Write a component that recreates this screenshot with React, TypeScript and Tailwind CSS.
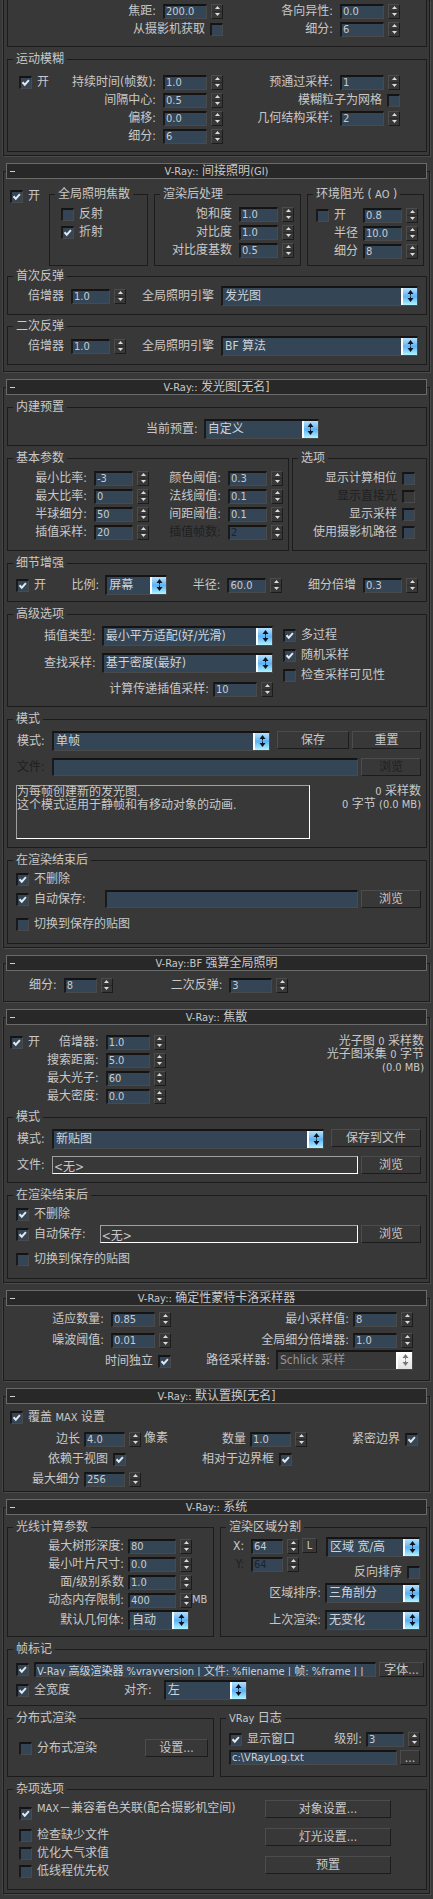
import { useId, type ReactNode } from "react";
import clsx from "clsx";

const well =
  "border-t-2 border-l-2 border-r border-b border-t-[#141414] border-l-[#1a1a1a] border-r-[#4a4a4a] border-b-[#4a4a4a]";
const raised =
  "border border-t-[#4c4c4c] border-l-[#4c4c4c] border-r-[#1c1c1c] border-b-[#1c1c1c]";

/* Latin runs are set one size below the Chinese text. */
function L({ children }: { children: ReactNode }) {
  return <span className="text-[11px]">{children}</span>;
}

function Panel({ title, className, children }: { title: ReactNode; className?: string; children: ReactNode }) {
  return (
    <section
      className={clsx(
        "mx-[3px] mt-[15px] border border-[#1c1c1c] px-[2px] shadow-[1px_1px_0_#4a4a4a,-1px_0_0_#444444]",
        className,
      )}
    >
      <h2 className="-mt-[9px] grid h-[16px] grid-cols-[20px_1fr_20px] items-center border border-[#6a6a6a] bg-[#282828] leading-[14px]">
        <button type="button" aria-label="折叠" className="flex h-[14px] items-center pl-[3px]">
          <span className="h-px w-[5px] bg-[#d0d0d0]" />
        </button>
        <span className="text-center whitespace-nowrap">{title}</span>
      </h2>
      {children}
    </section>
  );
}

type GroupProps = { title: ReactNode; className?: string; body?: string; children: ReactNode };

function Group({ title, className, body, children }: GroupProps) {
  return (
    <fieldset className={clsx("min-w-0 border border-[#1c1c1c]", className)}>
      <legend className="ml-[5px] px-[3px] leading-[14px] whitespace-nowrap">{title}</legend>
      <div className={body}>{children}</div>
    </fieldset>
  );
}

function Spinner() {
  return (
    <span className={clsx("flex h-[15px] w-[12px] shrink-0 flex-col", raised)}>
      <button type="button" tabIndex={-1} aria-label="增加" className="flex flex-1 items-center justify-center border-b border-[#2a2a2a]">
        <svg width="5" height="3" viewBox="0 0 5 3">
          <path d="M2.5 0 5 3H0Z" fill="#dcdcdc" />
        </svg>
      </button>
      <button type="button" tabIndex={-1} aria-label="减少" className="flex flex-1 items-center justify-center">
        <svg width="5" height="3" viewBox="0 0 5 3">
          <path d="M0 0H5L2.5 3Z" fill="#dcdcdc" />
        </svg>
      </button>
    </span>
  );
}

type FieldProps = {
  label: ReactNode;
  value: string;
  width?: string;
  gap?: string;
  className?: string;
  disabled?: boolean;
  after?: ReactNode;
};

function Field({ label, value, width = "w-[44px]", gap = "mr-[7px]", className, disabled, after }: FieldProps) {
  const id = useId();
  return (
    <div className={clsx("flex h-[18px] items-center justify-end", className)}>
      <label htmlFor={id} className={clsx("whitespace-nowrap", gap, disabled && "text-[#202020]")}>
        {label}
      </label>
      <input
        id={id}
        defaultValue={value}
        disabled={disabled}
        className={clsx(
          "mr-[4px] h-[15px] shrink-0 bg-[#344556] pl-px text-[11px] leading-[12px] outline-none",
          well,
          width,
          disabled ? "text-[#1c242c]" : "text-[#c8ccd0]",
        )}
      />
      <Spinner />
      {after}
    </div>
  );
}

type BoxProps = { id?: string; name?: string; checked?: boolean; disabled?: boolean; className?: string };

function Box({ id, name, checked, disabled, className }: BoxProps) {
  return (
    <span className={clsx("grid size-[13px] shrink-0", className)}>
      <input
        id={id}
        type="checkbox"
        aria-label={name}
        defaultChecked={checked}
        disabled={disabled}
        className={clsx(
          "peer col-start-1 row-start-1 size-[13px] appearance-none",
          well,
          disabled ? "bg-[#383838]" : "bg-[#344556]",
        )}
      />
      <svg
        viewBox="0 0 13 13"
        className="pointer-events-none invisible col-start-1 row-start-1 size-[13px] peer-checked:visible"
      >
        <path d="M3.5 6.2 5.8 8.7 9.9 4.2" fill="none" stroke="#e4e8ec" strokeWidth="2" />
      </svg>
    </span>
  );
}

type CheckProps = {
  label: ReactNode;
  checked?: boolean;
  disabled?: boolean;
  before?: boolean;
  className?: string;
};

function Check({ label, checked, disabled, before, className }: CheckProps) {
  const id = useId();
  return (
    <div
      className={clsx(
        "flex h-[18px] items-center gap-[5px]",
        before && "flex-row-reverse",
        disabled && "text-[#202020]",
        className,
      )}
    >
      <Box id={id} checked={checked} disabled={disabled} />
      <label htmlFor={id} className="whitespace-nowrap">
        {label}
      </label>
    </div>
  );
}

type PickProps = {
  label?: ReactNode;
  name?: string;
  value: string;
  width?: string;
  gap?: string;
  className?: string;
  disabled?: boolean;
};

function Pick({ label, name, value, width = "flex-1", gap = "mr-[6px]", className, disabled }: PickProps) {
  const id = useId();
  return (
    <div className={clsx("flex h-[20px] items-center", className)}>
      {label && (
        <label htmlFor={id} className={clsx("whitespace-nowrap", gap)}>
          {label}
        </label>
      )}
      <span className={clsx("grid h-[20px] min-w-0", width)}>
        <select
          id={id}
          aria-label={name}
          disabled={disabled}
          className={clsx(
            "col-start-1 row-start-1 h-[20px] w-full appearance-none pl-[2px] leading-[17px] opacity-100 outline-none",
            well,
            disabled ? "bg-[#383838] text-[#969696]" : "bg-[#344556] text-[#d0d4d8]",
          )}
        >
          <option>{value}</option>
        </select>
        <span
          className={clsx(
            "pointer-events-none col-start-1 row-start-1 mr-px flex h-[17px] w-[16px] items-center justify-center self-center justify-self-end border-l-2 border-white",
            disabled
              ? "bg-linear-to-b from-[#ffffff] to-[#e2e2e2]"
              : "bg-linear-to-b from-[#b4e0fc] via-[#5cb2f4] to-[#b0f4ff]",
          )}
        >
          <svg width="7" height="12" viewBox="0 0 7 12">
            <path d="M3.5 0 6.5 4H4V5.5H3V4H.5ZM3.5 12 .5 8H3V6.5H4V8H6.5Z" fill={disabled ? "#777777" : "#0c1420"} />
          </svg>
        </span>
      </span>
    </div>
  );
}

function Button({ children, className, disabled }: { children: ReactNode; className?: string; disabled?: boolean }) {
  return (
    <button
      type="button"
      disabled={disabled}
      className={clsx(
        "shrink-0 text-center leading-[14px] whitespace-nowrap",
        raised,
        className,
        disabled && "text-[#202020]",
      )}
    >
      {children}
    </button>
  );
}

const outlined = "border border-t-[#a0a0a0] border-l-[#a0a0a0] border-r-white border-b-white";

function AfterRender({ path, offset }: { path?: string; offset: string }) {
  return (
    <Group title="在渲染结束后" className="mt-[5px] ml-px" body="pr-[5px] pb-[10px] pl-[8px]">
      <Check label="不删除" checked className="mt-[3px]" />
      <div className="mt-[2px] flex items-center">
        <Check label="自动保存:" checked className={offset} />
        <input
          aria-label="保存路径"
          readOnly={path !== undefined}
          defaultValue={path ?? ""}
          className={clsx(
            "mr-[3px] h-[18px] min-w-0 flex-1 pl-px leading-[14px] outline-none",
            path ? outlined : clsx(well, "bg-[#344556]"),
          )}
        />
        <Button className="h-[18px] w-[60px]">浏览</Button>
      </div>
      <Check label="切换到保存的贴图" className="mt-[7px]" />
    </Group>
  );
}

export default function App() {
  const fileId = useId();
  const file2Id = useId();
  const maxId = useId();
  return (
    <main className="min-h-screen overflow-hidden bg-[#383838] pb-[5px] font-['DejaVu_Sans_Condensed','Noto_Sans_CJK_SC',sans-serif] text-[12px] leading-[14px] text-[#c8c8c8]">
      <section className="mx-[3px] border border-t-0 border-[#1c1c1c] px-[2px] pb-[3px] shadow-[1px_1px_0_#4a4a4a,-1px_0_0_#444444]">
        <div className="ml-px grid grid-cols-[215fr_203fr] border border-t-0 border-[#1c1c1c] pt-[2px] pb-[8px]">
          <div>
            <Field label="焦距:" value="200.0" />
            <Check label="从摄影机获取" before />
          </div>
          <div className="pr-[26px]">
            <Field label="各向异性:" value="0.0" />
            <Field label="细分:" value="6" />
          </div>
        </div>
        <Group title="运动模糊" className="mt-[5px] ml-px" body="pb-[6px]">
          <div className="grid grid-cols-[60fr_155fr_203fr] pt-[7px]">
            <Check label="开" checked className="ml-[11px]" />
            <div>
              <Field label="持续时间(帧数):" value="1.0" />
              <Field label="间隔中心:" value="0.5" />
              <Field label="偏移:" value="0.0" />
              <Field label="细分:" value="6" />
            </div>
            <div className="pr-[26px]">
              <Field label="预通过采样:" value="1" />
              <Check label="模糊粒子为网格" before />
              <Field label="几何结构采样:" value="2" />
            </div>
          </div>
        </Group>
      </section>

      <Panel title={<><L>V-Ray::</L> 间接照明<L>(GI)</L></>} className="pb-[6px]">
        <div className="mt-[8px] grid grid-cols-[33px_99fr_147fr_117fr] gap-x-[6px] pr-[3px] pl-[4px]">
          <Check label="开" checked />
          <Group title="全局照明焦散" body="pb-[5px] pl-[11px]">
            <Check label="反射" className="mt-[4px]" />
            <Check label="折射" checked />
          </Group>
          <Group title="渲染后处理" body="pr-[6px] pb-[5px]">
            <Field label="饱和度" value="1.0" width="w-[39px]" className="mt-[4px]" />
            <Field label="对比度" value="1.0" width="w-[39px]" />
            <Field label="对比度基数" value="0.5" width="w-[39px]" />
          </Group>
          <Group title={<>环境阻光 ( <L>AO</L> )</>} body="pr-[5px] pb-[5px] pl-[8px]">
            <div className="mt-[4px] flex items-center justify-between">
              <Box name="环境阻光" />
              <Field
                label={<span className="inline-block w-[24px]">开</span>}
                value="0.8"
                width="w-[39px]"
                gap="mr-[5px]"
              />
            </div>
            <Field label="半径" value="10.0" width="w-[39px]" gap="mr-[5px]" />
            <Field label="细分" value="8" width="w-[39px]" gap="mr-[5px]" />
          </Group>
        </div>
        <Group title="首次反弹" className="mt-[3px] ml-px" body="pr-[8px] pb-[8px] pl-[20px]">
          <div className="mt-[3px] flex items-center">
            <Field label="倍增器" value="1.0" width="w-[39px]" className="mr-[16px]" />
            <Pick label="全局照明引擎" value="发光图" gap="mr-[7px]" className="min-w-0 flex-1" />
          </div>
        </Group>
        <Group title="二次反弹" className="mt-[4px] ml-px" body="pr-[8px] pb-[8px] pl-[20px]">
          <div className="mt-[3px] flex items-center">
            <Field label="倍增器" value="1.0" width="w-[39px]" className="mr-[16px]" />
            <Pick label="全局照明引擎" value="BF 算法" gap="mr-[7px]" className="min-w-0 flex-1" />
          </div>
        </Group>
      </Panel>

      <Panel title={<><L>V-Ray::</L> 发光图[无名]</>} className="pb-[3px]">
        <Group title="内建预置" className="mt-[5px] ml-px" body="pb-[6px]">
          <Pick label="当前预置:" value="自定义" width="w-[115px]" className="mt-[5px] ml-[138px]" />
        </Group>
        <div className="mt-[5px] ml-px grid grid-cols-[282fr_135fr] gap-x-[3px]">
          <Group title="基本参数" body="pb-[9px]">
            <div className="mt-[4px] grid grid-cols-[141fr_139fr]">
              <div>
                <Field label="最小比率:" value="-3" width="w-[39px]" />
                <Field label="最大比率:" value="0" width="w-[39px]" />
                <Field label="半球细分:" value="50" width="w-[39px]" />
                <Field label="插值采样:" value="20" width="w-[39px]" />
              </div>
              <div className="pr-[5px]">
                <Field label="颜色阈值:" value="0.3" width="w-[39px]" />
                <Field label="法线阈值:" value="0.1" width="w-[39px]" />
                <Field label="间距阈值:" value="0.1" width="w-[39px]" />
                <Field label="插值帧数:" value="2" width="w-[39px]" disabled />
              </div>
            </div>
          </Group>
          <Group title="选项" body="pr-[11px] pb-[9px]">
            <Check label="显示计算相位" before className="mt-[4px]" />
            <Check label="显示直接光" before disabled />
            <Check label="显示采样" before />
            <Check label="使用摄影机路径" before />
          </Group>
        </div>
        <Group title="细节增强" className="mt-[5px] ml-px" body="pr-[8px] pb-[6px] pl-[8px]">
          <div className="mt-[5px] flex items-center justify-between">
            <Check label="开" checked />
            <Pick label="比例:" value="屏幕" width="w-[62px]" />
            <Field label="半径:" value="60.0" width="w-[39px]" />
            <Field label="细分倍增" value="0.3" width="w-[39px]" />
          </div>
        </Group>
        <Group title="高级选项" className="mt-[5px] ml-px" body="pb-[8px]">
          <div className="mt-[5px] grid grid-cols-[265fr_153fr]">
            <div className="flex flex-col gap-[7px] pl-[36px]">
              <Pick label="插值类型:" value="最小平方适配(好/光滑)" />
              <Pick label="查找采样:" value="基于密度(最好)" />
              <Field label="计算传递插值采样:" value="10" gap="mr-[4px]" />
            </div>
            <div className="flex flex-col gap-[2px] pl-[10px]">
              <Check label="多过程" checked />
              <Check label="随机采样" checked />
              <Check label="检查采样可见性" />
            </div>
          </div>
        </Group>
        <Group title="模式" className="mt-[5px] ml-px" body="pr-[5px] pb-[8px] pl-[9px]">
          <div className="mt-[5px] flex items-start gap-[3px]">
            <Pick label="模式:" value="单帧" gap="w-[35px]" className="mr-[4px] min-w-0 flex-1" />
            <Button className="h-[18px] w-[72px]">保存</Button>
            <Button className="h-[18px] w-[69px]">重置</Button>
          </div>
          <div className="mt-[7px] flex items-center">
            <label htmlFor={fileId} className="w-[35px] text-[#202020]">
              文件:
            </label>
            <input id={fileId} disabled className={clsx("mr-[3px] h-[18px] min-w-0 flex-1 bg-[#344556]", well)} />
            <Button disabled className="h-[18px] w-[60px]">
              浏览
            </Button>
          </div>
          <div className="mt-[9px] -ml-px flex justify-between">
            <p className={clsx("h-[54px] w-[294px] leading-[13px] whitespace-nowrap", outlined)}>
              为每帧创建新的发光图.
              <br />
              这个模式适用于静帧和有移动对象的动画.
            </p>
            <p className="text-right leading-[13px] whitespace-nowrap">
              <L>0</L> 采样数
              <br />
              <L>0</L> 字节 <L>(0.0 MB)</L>
            </p>
          </div>
        </Group>
        <AfterRender offset="mr-[19px]" />
      </Panel>

      <Panel title={<><L>V-Ray::BF</L> 强算全局照明</>} className="pb-[7px]">
        <div className="mt-[5px] flex pl-[23px]">
          <Field label="细分:" value="8" width="w-[33px]" className="mr-[58px]" />
          <Field label="二次反弹:" value="3" width="w-[43px]" />
        </div>
      </Panel>

      <Panel title={<><L>V-Ray::</L> 焦散</>} className="pb-[3px]">
        <div className="mt-[8px] flex items-start pr-[3px] pl-[4px]">
          <Check label="开" checked />
          <div className="ml-[7px]">
            <Field label="倍增器:" value="1.0" />
            <Field label="搜索距离:" value="5.0" />
            <Field label="最大光子:" value="60" />
            <Field label="最大密度:" value="0.0" />
          </div>
          <p className="mt-[2px] flex-1 text-right leading-[13px] whitespace-nowrap">
            光子图 <L>0</L> 采样数
            <br />
            光子图采集 <L>0</L> 字节
            <br />
            <L>(0.0 MB)</L>
          </p>
        </div>
        <Group title="模式" className="mt-[5px] ml-px" body="pr-[5px] pb-[8px] pl-[9px]">
          <div className="mt-[5px] flex items-start">
            <Pick label="模式:" value="新贴图" gap="w-[35px]" className="mr-[7px] min-w-0 flex-1" />
            <Button className="h-[18px] w-[90px]">保存到文件</Button>
          </div>
          <div className="mt-[7px] flex items-center">
            <label htmlFor={file2Id} className="w-[35px]">
              文件:
            </label>
            <input
              id={file2Id}
              readOnly
              defaultValue="<无>"
              className={clsx("mr-[3px] h-[18px] min-w-0 flex-1 pl-px leading-[14px] outline-none", outlined)}
            />
            <Button className="h-[18px] w-[60px]">浏览</Button>
          </div>
        </Group>
        <AfterRender path="<无>" offset="mr-[14px]" />
      </Panel>

      <Panel title={<><L>V-Ray::</L> 确定性蒙特卡洛采样器</>} className="pb-[10px]">
        <div className="mt-[4px] grid grid-cols-[165fr_256fr]">
          <div className="flex flex-col gap-[3px]">
            <Field label="适应数量:" value="0.85" />
            <Field label="噪波阈值:" value="0.01" />
            <Check label="时间独立" checked before />
          </div>
          <div className="flex flex-col gap-[3px] pr-[14px]">
            <Field label="最小采样值:" value="8" gap="mr-[4px]" />
            <Field label="全局细分倍增器:" value="1.0" gap="mr-[4px]" />
            <Pick label="路径采样器:" value="Schlick 采样" width="w-[137px]" className="-mt-[2px] justify-end" disabled />
          </div>
        </div>
      </Panel>

      <Panel title={<><L>V-Ray::</L> 默认置换[无名]</>} className="pb-[3px]">
        <Check label={<>覆盖 <L>MAX</L> 设置</>} checked className="mt-[4px] ml-[4px]" />
        <div className="mt-[4px] flex pr-[9px]">
          <div className="flex w-[135px] flex-col gap-[2px]">
            <Field label="边长" value="4.0" width="w-[41px]" gap="mr-[4px]" />
            <Check label="依赖于视图" checked before className="mr-[15px]" />
            <Field label="最大细分" value="256" width="w-[41px]" gap="mr-[4px]" />
          </div>
          <span className="ml-[3px] leading-[16px]">像素</span>
          <div className="flex flex-1 flex-col items-end gap-[2px]">
            <Field label="数量" value="1.0" width="w-[41px]" gap="mr-[4px]" />
            <Check label="相对于边界框" checked before className="mr-[15px]" />
          </div>
          <div className="flex w-[111px] justify-end">
            <Check label="紧密边界" checked before />
          </div>
        </div>
      </Panel>

      <Panel title={<><L>V-Ray::</L> 系统</>} className="pb-[3px]">
        <div className="mt-[5px] ml-px grid grid-cols-2 gap-x-[6px]">
          <Group title="光线计算参数" body="pb-[6px]">
            <div className="mt-[3px] flex justify-end pr-[21px]">
              <div>
                <Field label="最大树形深度:" value="80" width="w-[48px]" gap="mr-[4px]" />
                <Field label="最小叶片尺寸:" value="0.0" width="w-[48px]" gap="mr-[4px]" />
                <Field label="面/级别系数" value="1.0" width="w-[48px]" gap="mr-[4px]" />
                <Field
                  label="动态内存限制:"
                  value="400"
                  width="w-[48px]"
                  gap="mr-[4px]"
                  after={<span className="-mr-[18px] w-[18px] text-[11px]">MB</span>}
                />
                <Pick label="默认几何体:" value="自动" width="w-[61px]" gap="mr-[4px]" className="mt-px justify-end pr-[3px]" />
              </div>
            </div>
          </Group>
          <Group title="渲染区域分割" body="pr-[6px] pb-[6px] pl-[12px]">
            <div className="mt-[3px] flex h-[46px] items-start">
              <div>
                <Field label="X:" value="64" width="w-[32px]" />
                <Field label="Y:" value="64" width="w-[32px]" disabled />
              </div>
              <Button className="mt-px ml-[3px] h-[15px] w-[15px] text-[11px] leading-[12px]">L</Button>
              <div className="ml-[9px] min-w-0 flex-1">
                <Pick name="区域尺寸" value="区域 宽/高" />
                <Check label="反向排序" before className="mt-[6px]" />
              </div>
            </div>
            <div className="flex flex-col items-end gap-[7px]">
              <Pick label="区域排序:" value="三角剖分" width="w-[95px]" gap="mr-[4px]" />
              <Pick label="上次渲染:" value="无变化" width="w-[95px]" gap="mr-[4px]" />
            </div>
          </Group>
        </div>
        <Group title="帧标记" className="mt-[5px] ml-px" body="pr-[2px] pb-[5px] pl-[8px]">
          <div className="mt-[4px] flex h-[18px] items-center">
            <Box name="帧标记" checked className="mr-[5px]" />
            <input
              aria-label="帧标记文本"
              defaultValue="V-Ray 高级渲染器 %vrayversion | 文件: %filename | 帧: %frame | |"
              className={clsx(
                "mr-[3px] h-[15px] min-w-0 flex-1 bg-[#344556] pl-px text-[11px] leading-[12px] text-[#d0d4d8] outline-none",
                well,
              )}
            />
            <Button className="h-[15px] w-[45px] leading-[12px]">字体...</Button>
          </div>
          <div className="mt-[2px] flex items-center">
            <Check label="全宽度" checked className="mr-[54px]" />
            <Pick label="对齐:" value="左" width="w-[83px]" gap="mr-[12px]" />
          </div>
        </Group>
        <div className="mt-[5px] ml-px grid grid-cols-2 gap-x-[6px]">
          <Group title="分布式渲染" body="pr-[5px] pl-[11px]">
            <div className="mt-[14px] flex items-center justify-between">
              <Check label="分布式渲染" />
              <Button className="h-[18px] w-[63px]">设置...</Button>
            </div>
          </Group>
          <Group title={<><L>VRay</L> 日志</>} body="pr-[6px] pb-[10px] pl-[8px]">
            <div className="mt-[4px] flex justify-between">
              <Check label="显示窗口" checked />
              <Field label="级别:" value="3" width="w-[38px]" gap="mr-[4px]" />
            </div>
            <div className="flex h-[18px] items-center">
              <input
                aria-label="日志文件"
                defaultValue="c:\VRayLog.txt"
                className={clsx(
                  "mr-[3px] h-[15px] min-w-0 flex-1 bg-[#344556] pl-px text-[11px] leading-[12px] text-[#d0d4d8] outline-none",
                  well,
                )}
              />
              <Button className="h-[15px] w-[20px] leading-[11px]">...</Button>
            </div>
          </Group>
        </div>
        <Group title="杂项选项" className="mt-[5px] ml-px" body="pb-[9px] pl-[11px]">
          <div className="flex justify-between pr-[35px]">
            <div className="mt-[3px]">
              <div className="mb-[6px] flex h-[21px] items-start gap-[5px]">
                <Box id={maxId} checked className="self-end" />
                <label htmlFor={maxId} className="leading-[18px] whitespace-nowrap">
                  <L>MAX</L>－兼容着色关联(配合摄影机空间)
                </label>
              </div>
              <Check label="检查缺少文件" />
              <Check label="优化大气求值" />
              <Check label="低线程优先权" />
            </div>
            <div className="mt-[4px] flex w-[126px] flex-col gap-[10px]">
              <Button className="h-[18px]">对象设置...</Button>
              <Button className="h-[18px]">灯光设置...</Button>
              <Button className="h-[18px]">预置</Button>
            </div>
          </div>
        </Group>
      </Panel>
    </main>
  );
}
